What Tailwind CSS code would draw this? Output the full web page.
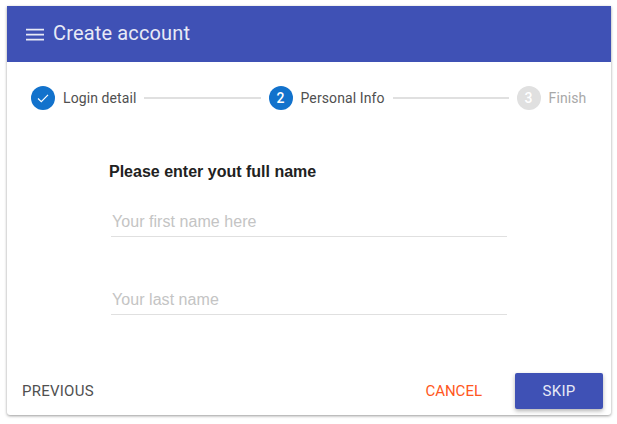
<!DOCTYPE html>
<html lang="en">
  <head>
    <meta charset="UTF-8" />
    <title>Create account</title>
    <script src="https://cdn.jsdelivr.net/npm/@tailwindcss/browser@4"></script>
  </head>

  <body class="bg-white font-['Roboto',sans-serif] overflow-hidden">
    <div class="w-[617px] h-[424px] pt-[6px] pl-[7px]">
      <div class="w-[604px] h-[409px] bg-white rounded-b-[3px] shadow-[0_1px_3px_rgba(0,0,0,0.4)] flex flex-col">
        <!-- header -->
        <div class="h-[56px] bg-[#3f51b5] flex items-center pl-[19px] text-[#e8eaf6]">
          <svg width="18" height="14" viewBox="0 0 18 14" class="mt-[2px]" fill="none" stroke="currentColor" stroke-width="1.8">
            <path d="M0 1.7h18M0 6.7h18M0 11.7h18" />
          </svg>
          <span class="ml-[9px] mb-[2px] text-[20px] leading-none tracking-[0.15px]">Create account</span>
        </div>

        <!-- stepper -->
        <div class="h-[72px] flex items-center pl-[24px] text-[14px] tracking-[0.1px]">
          <div class="w-[24px] h-[24px] rounded-full bg-[#1272cc] flex items-center justify-center">
            <svg width="14" height="14" viewBox="0 0 14 14" fill="none" stroke="white" stroke-width="1.2">
              <path d="M2 7.5l3.3 3.2L12 3.8" />
            </svg>
          </div>
          <span class="ml-[8px] text-[#505050]">Login detail</span>
          <div class="ml-[7px] w-[117px] h-[2px] bg-[#e0e0e0]"></div>
          <div class="ml-[8px] w-[24px] h-[24px] rounded-full bg-[#1272cc] text-white font-medium flex items-center justify-center">2</div>
          <span class="ml-[8px] text-[#505050]">Personal Info</span>
          <div class="ml-[8px] w-[116px] h-[2px] bg-[#e0e0e0]"></div>
          <div class="ml-[8px] w-[24px] h-[24px] rounded-full bg-[#e0e0e0] text-white font-medium flex items-center justify-center">3</div>
          <span class="ml-[8px] text-[#a8a8a8]">Finish</span>
        </div>

        <!-- form -->
        <div class="flex-1 pl-[102px] font-['Liberation_Sans',sans-serif]">
          <h2 class="mt-[26px] text-[16px] leading-[24px] font-bold text-[#212121]">Please enter yout full name</h2>
          <div class="ml-[2px] w-[396px] mt-[19px] h-[34px] border-b border-[#e0e0e0] text-[16px] leading-[37px] tracking-[0.05px] text-[#c4c4c4] pl-px">Your first name here</div>
          <div class="ml-[2px] w-[396px] mt-[44px] h-[34px] border-b border-[#e0e0e0] text-[16px] leading-[37px] tracking-[0.05px] text-[#c4c4c4] pl-px">Your last name</div>
        </div>

        <!-- footer -->
        <div class="h-[52px] flex items-center justify-between pl-[15px] pr-[8px] pt-[4px] text-[15px] tracking-[0.25px]">
          <span class="text-[#505050]">PREVIOUS</span>
          <div class="flex items-center">
            <span class="text-[#ff5722] tracking-normal">CANCEL</span>
            <div class="ml-[33px] w-[88px] h-[36px] bg-[#3f51b5] rounded-[2px] shadow-[0_2px_4px_rgba(0,0,0,0.3)] text-[#e8eaf6] flex items-center justify-center">SKIP</div>
          </div>
        </div>
      </div>
    </div>
  </body>
</html>
